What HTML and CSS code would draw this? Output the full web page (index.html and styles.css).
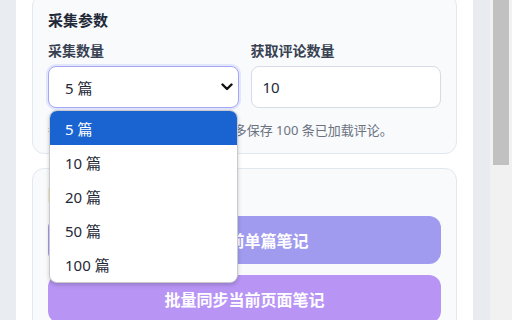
FILE: index.html
```html
<!DOCTYPE html>
<html lang="zh-CN">
<head>
<meta charset="utf-8">
<link rel="stylesheet" href="styles.css">
</head>
<body>
<div class="edge-left"></div>
<main class="panel">
  <section class="card card-params">
    <h2 class="card-title">采集参数</h2>
    <div class="fields">
      <div class="field">
        <label class="field-label">采集数量</label>
        <div class="select-wrap">
          <div class="select focused">
            <span>5 篇</span>
            <svg class="chevron" width="12" height="8" viewBox="0 0 12 8"><path d="M1.5 1.5 L6 6 L10.5 1.5" fill="none" stroke="#111" stroke-width="2.4" stroke-linecap="round" stroke-linejoin="round"/></svg>
          </div>
          <ul class="dropdown">
            <li class="opt active">5 篇</li>
            <li class="opt">10 篇</li>
            <li class="opt">20 篇</li>
            <li class="opt">50 篇</li>
            <li class="opt">100 篇</li>
          </ul>
        </div>
      </div>
      <div class="field">
        <label class="field-label">获取评论数量</label>
        <div class="input">10</div>
      </div>
    </div>
    <p class="hint">每篇笔记按顺序获取前 N 条，最多保存 100 条已加载评论。</p>
  </section>
  <section class="card card-actions">
    <h2 class="card-title">同步操作</h2>
    <button class="btn btn-single">同步当前单篇笔记</button>
    <button class="btn btn-batch">批量同步当前页面笔记</button>
  </section>
</main>
<div class="edge-right"></div>
<div class="scrollbar"><div class="thumb"></div></div>
</body>
</html>
```

FILE: styles.css
```css
* { box-sizing: border-box; }
html, body { margin: 0; padding: 0; }
body {
  width: 512px;
  height: 320px;
  overflow: hidden;
  display: flex;
  font-family: "Noto Sans", "Noto Sans CJK SC", sans-serif;
  color: #1f2937;
  background: #ffffff;
}
.edge-left { width: 16px; flex: none; background: #e9edf2; }
.edge-right { width: 17px; flex: none; background: #e8ecf1; }
.scrollbar { width: 22px; flex: none; background: #f1f1f1; padding: 0 3px; }
.thumb { height: 165px; background: #c1c1c1; }
.panel {
  flex: 1;
  background: #ffffff;
  padding: 0 16px;
  display: flex;
  flex-direction: column;
  gap: 14px;
}
.card {
  background: #f8fafc;
  border: 1px solid #e2e8f0;
  border-radius: 12px;
  padding: 15px 15px 14px;
}
.card-params { margin-top: -6px; }
.card-title {
  margin: 0 0 12px;
  font-size: 15px;
  line-height: 20px;
  font-weight: 700;
  color: #1f2937;
}
.fields {
  display: grid;
  grid-template-columns: 1fr 1fr;
  gap: 12px;
}
.field { display: flex; flex-direction: column; gap: 6px; }
.field-label {
  font-size: 14px;
  line-height: 18px;
  font-weight: 700;
  color: #374151;
}
.select-wrap { position: relative; }
.select, .input {
  height: 42px;
  border-radius: 8px;
  background: #ffffff;
  font-size: 15px;
  display: flex;
  align-items: center;
  color: #1f2937;
}
.select {
  border: 1.5px solid #a5a6f6;
  box-shadow: 0 0 0 2px rgba(129, 140, 248, 0.18);
  padding: 0 5px 0 16px;
  justify-content: space-between;
}
.input {
  border: 1px solid #d6dce5;
  padding: 0 11px;
}
.chevron { display: block; }
.hint {
  margin: 13px 0 0;
  font-size: 13px;
  line-height: 18px;
  color: #6b7280;
}
.dropdown {
  position: absolute;
  top: 44px;
  left: 1px;
  right: 1px;
  margin: 0;
  padding: 0;
  list-style: none;
  background: #ffffff;
  border: 1px solid #c9c9cf;
  border-radius: 8px;
  overflow: hidden;
  box-shadow: 0 2px 4px rgba(0, 0, 0, 0.18);
  z-index: 5;
}
.opt {
  height: 34.2px;
  display: flex;
  align-items: center;
  padding-left: 15px;
  font-size: 15px;
  color: #1f2937;
}
.opt.active { background: #1a64d2; color: #ffffff; }
.card-actions { display: flex; flex-direction: column; }
.btn {
  height: 48px;
  border: none;
  border-radius: 12px;
  color: #ffffff;
  font-family: inherit;
  font-size: 16px;
  font-weight: 700;
  margin-bottom: 11px;
}
.btn-single { background: #a19bef; }
.btn-batch { background: #b895f5; }
```
